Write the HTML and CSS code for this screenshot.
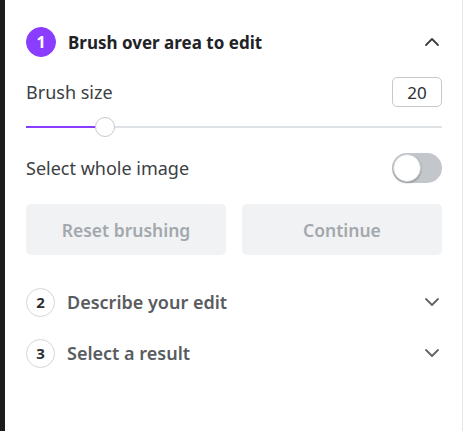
FILE: index.html
```html
<!DOCTYPE html>
<html>
<head>
<meta charset="utf-8">
<link rel="stylesheet" href="styles.css">
</head>
<body>
<div class="frame">
  <div class="strip"></div>
  <div class="panel">
    <div class="step-head active">
      <span class="num num-active">1</span>
      <span class="step-title">Brush over area to edit</span>
      <svg class="chev" width="16" height="10" viewBox="0 0 16 10"><path d="M2 8 L8 2 L14 8" fill="none" stroke="#3a3e42" stroke-width="1.8" stroke-linecap="round" stroke-linejoin="round"/></svg>
    </div>
    <div class="row size-row">
      <span class="label">Brush size</span>
      <span class="num-input">20</span>
    </div>
    <div class="slider">
      <div class="track"></div>
      <div class="fill"></div>
      <div class="thumb"></div>
    </div>
    <div class="row select-row">
      <span class="label">Select whole image</span>
      <span class="toggle"><span class="knob"></span></span>
    </div>
    <div class="buttons">
      <button class="btn">Reset brushing</button>
      <button class="btn">Continue</button>
    </div>
    <div class="step-head step2">
      <span class="num">2</span>
      <span class="step-title muted">Describe your edit</span>
      <svg class="chev" width="16" height="10" viewBox="0 0 16 10"><path d="M2 2 L8 8 L14 2" fill="none" stroke="#606468" stroke-width="1.8" stroke-linecap="round" stroke-linejoin="round"/></svg>
    </div>
    <div class="step-head step3">
      <span class="num">3</span>
      <span class="step-title muted">Select a result</span>
      <svg class="chev" width="16" height="10" viewBox="0 0 16 10"><path d="M2 2 L8 8 L14 2" fill="none" stroke="#606468" stroke-width="1.8" stroke-linecap="round" stroke-linejoin="round"/></svg>
    </div>
  </div>
</div>
</body>
</html>
```
FILE: styles.css
```css
* { box-sizing: border-box; }
html, body { margin: 0; padding: 0; background: #fff; }
body { font-family: "Noto Sans", "Liberation Sans", sans-serif; color: #2b2f33; }
.frame { display: flex; width: 463px; height: 431px; }
.strip { width: 5px; background: #1c1c1c; flex: none; }
.panel {
  flex: 1;
  display: flex;
  flex-direction: column;
  padding: 27px 20px 0 21px;
  border-right: 1px solid #e6e7e9;
}
.step-head { display: flex; align-items: center; height: 30px; }
.num {
  width: 29px; height: 29px; border-radius: 50%;
  border: 1.5px solid #d3d6da;
  display: flex; align-items: center; justify-content: center;
  font-size: 15px; font-weight: 700; color: #2b2f33;
  flex: none; margin-right: 12px;
}
.num-active { background: #8b3dff; border-color: #8b3dff; color: #fff; width: 30px; height: 30px; font-size: 16px; }
.step-title { font-size: 17px; font-weight: 700; color: #1f2327; flex: 1; }
.step-title.muted { font-size: 18px; font-weight: 600; color: #585c61; }
.chev { flex: none; margin-right: 2px; }
.row { display: flex; align-items: center; justify-content: space-between; height: 30px; }
.label { font-size: 18px; color: #3c4043; }
.size-row { margin-top: 20px; }
.num-input {
  width: 50px; height: 30px; border: 1px solid #c6c9cd; border-radius: 5px;
  display: flex; align-items: center; justify-content: center;
  font-size: 17px; color: #2b2f33;
}
.slider { position: relative; height: 20px; margin-top: 10px; }
.track { position: absolute; left: 0; right: 0; top: 9px; height: 2px; background: #dfe2e5; border-radius: 1px; }
.fill { position: absolute; left: 0; width: 72px; top: 9px; height: 2px; background: #8b3dff; }
.thumb {
  position: absolute; left: 69px; top: 0; width: 20px; height: 20px; border-radius: 50%;
  background: #fff; border: 1.5px solid #c6c9cd;
}
.select-row { margin-top: 16px; }
.toggle {
  width: 50px; height: 30px; border-radius: 15px; background: #c3c6ca;
  position: relative; display: block;
}
.knob {
  position: absolute; left: 1px; top: 1px; width: 28px; height: 28px; border-radius: 50%;
  background: #fff; border: 1px solid #d0d3d6; box-shadow: 0 1px 2px rgba(0,0,0,0.3);
}
.buttons { display: flex; gap: 16px; margin-top: 21px; }
.btn {
  flex: 1; height: 51px; border: none; border-radius: 5px; background: #f1f2f4;
  font-family: inherit; font-size: 17.5px; font-weight: 600; color: #a3a8ad;
}
.step2 { margin-top: 32px; }
.step3 { margin-top: 21px; }
```
